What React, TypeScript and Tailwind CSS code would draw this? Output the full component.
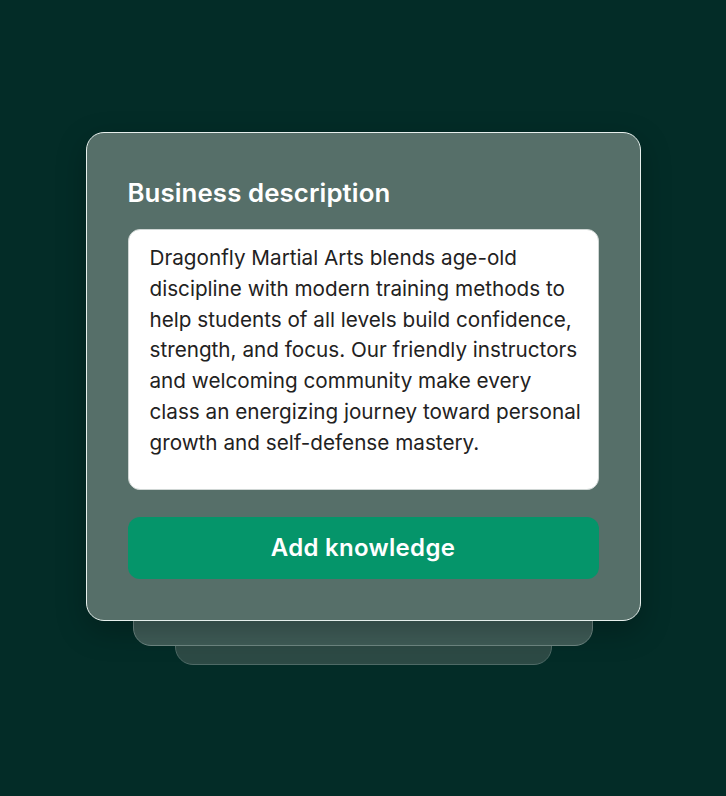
export default function App() {
  return (
    <div
      className="min-h-screen w-full bg-[#032c27] flex flex-col items-center pt-[132px]"
      style={{ fontFamily: 'Inter, "Noto Sans", sans-serif' }}
    >
      <div className="relative z-30 w-[555px] h-[489px] rounded-[18px] border-[1.5px] border-[#e6efec] bg-[#566f69] px-[41px] pt-[43px] shadow-[0_10px_30px_rgba(0,0,0,0.25)] flex flex-col">
        <h1 className="text-[25.8px] leading-[34px] font-semibold text-white tracking-[0.1px]">
          Business description
        </h1>
        <div className="mt-[19px] h-[261px] rounded-[12px] border border-[#cfd6d4] bg-white pl-[21px] pr-[14px] pt-[13px] text-[20.7px] leading-[30.8px] text-[#1f2222]">
          Dragonfly Martial Arts blends age-old discipline with modern training methods to help students of all levels build confidence, strength, and focus. Our friendly instructors and welcoming community make every class an energizing journey toward personal growth and self-defense mastery.
        </div>
        <button className="mt-[27px] h-[62px] w-full rounded-[12px] bg-[#05956a] text-[24px] tracking-[0.3px] font-semibold text-white">
          Add knowledge
        </button>
      </div>
      <div className="relative z-20 -mt-[20px] h-[45px] w-[460px] rounded-[18px] border border-[#6f8783] bg-[#3f5c57]" />
      <div className="relative z-10 -mt-[26px] h-[45px] w-[377px] rounded-[18px] border border-[#4f6a66] bg-[#2d4a45]" />
    </div>
  );
}
